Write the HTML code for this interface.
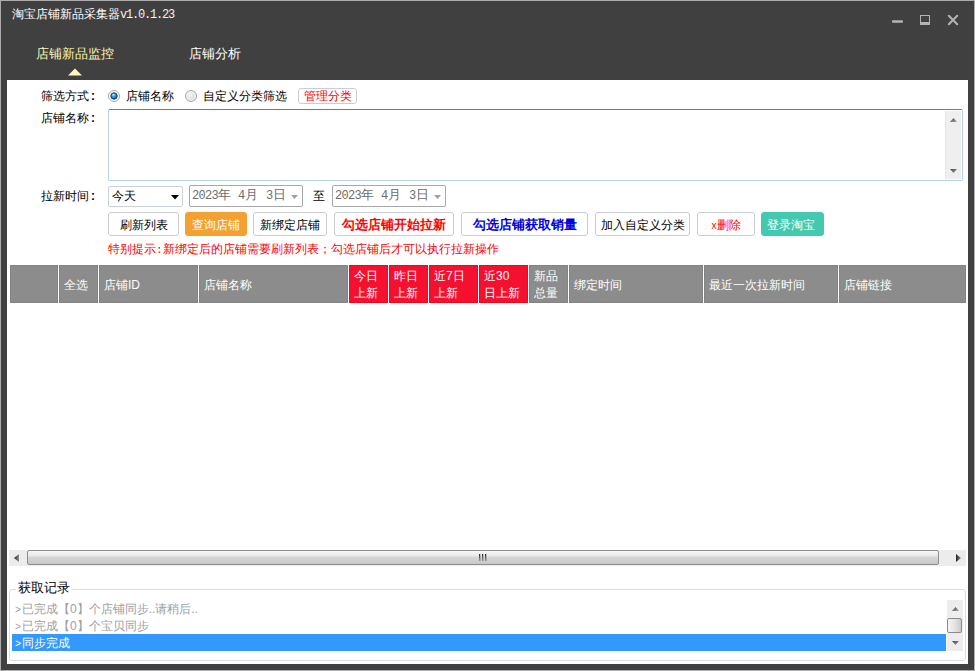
<!DOCTYPE html>
<html><head><meta charset="utf-8">
<style>
*{margin:0;padding:0;box-sizing:border-box}
html,body{width:975px;height:671px;overflow:hidden;background:#404040}
body{position:relative;font-family:"Liberation Sans",sans-serif;font-size:12px;line-height:12px;color:#000}
.a{position:absolute;white-space:nowrap}
#frame{position:absolute;left:0;top:0;width:975px;height:671px;border:1px solid #acacac}
#content{position:absolute;left:7px;top:80px;width:961px;height:584px;background:#fff}
.btn{position:absolute;height:24px;border:1px solid #c9cdd2;border-radius:3px;background:#fff;text-align:center;line-height:22px;font-size:12px;padding-top:1px}
.th{position:absolute;top:265px;height:38px;background:#8c8c8c;color:#fff;font-size:12px;box-shadow:inset 0 0 0 1px #838383}
.th span{position:absolute;left:5px;top:14px;white-space:nowrap}
.th.red{background:#f51030;box-shadow:inset 0 0 0 1px #ff0018}
.col{font-weight:bold;margin-left:2px}
.mono{font-family:"Liberation Mono",monospace;font-size:12px;letter-spacing:-0.7px}
.d13{font-size:13px}
.gt{font-family:"Liberation Mono",monospace;font-size:10px;margin-left:1px;margin-right:1px}
</style></head><body>
<div id="frame"></div>
<div class="a" style="left:12px;top:8px;color:#fff">淘宝店铺新品采集器<span style="font-family:'Liberation Mono',monospace;font-size:12px;letter-spacing:-1.2px;color:#f0f0f0">v1.0.1.23</span></div>
<!-- window controls -->
<div class="a" style="left:892px;top:20px;width:11px;height:3px;background:#b4b4b4;border-radius:1px;transform:scaleY(.8)"></div>
<div class="a" style="left:920px;top:15px;width:10px;height:10px;border:1px solid #b4b4b4;border-bottom:3px solid #b4b4b4"></div>
<svg class="a" style="left:947px;top:14px" width="12" height="12"><path d="M1.8 1.8L10.2 10.2M10.2 1.8L1.8 10.2" stroke="#b4b4b4" stroke-width="2" stroke-linecap="round"/></svg>
<!-- tabs -->
<div class="a" style="left:36px;top:47px;color:#fff5b0;font-size:13px;line-height:13px">店铺新品监控</div>
<div class="a" style="left:189px;top:47px;color:#fff;font-size:13px;line-height:13px">店铺分析</div>
<svg class="a" style="left:68px;top:68px" width="14" height="8"><path d="M0 7.5L7 0.5L14 7.5Z" fill="#fff9bd"/></svg>
<div id="content"></div>

<div class="a" style="left:41px;top:90px">筛选方式<span class="col">:</span></div>
<svg class="a" style="left:108px;top:90px" width="12" height="12"><defs><radialGradient id="rb" cx="0.4" cy="0.3" r="0.7"><stop offset="0" stop-color="#b8f0ff"/><stop offset="0.45" stop-color="#2aa0e8"/><stop offset="1" stop-color="#0a5a9a"/></radialGradient></defs><circle cx="6" cy="6" r="5.5" fill="#fff" stroke="#a4a4a4" stroke-width="1"/><circle cx="6" cy="6" r="3.2" fill="url(#rb)" stroke="#163c60" stroke-width="1"/></svg>
<div class="a" style="left:126px;top:90px">店铺名称</div>
<svg class="a" style="left:185px;top:90px" width="12" height="12"><defs><radialGradient id="rg" cx="0.4" cy="0.4" r="0.6"><stop offset="0" stop-color="#f4f4f4"/><stop offset="1" stop-color="#d4dae2"/></radialGradient></defs><circle cx="6" cy="6" r="5.5" fill="url(#rg)" stroke="#a4a4a4" stroke-width="1"/><circle cx="6" cy="6" r="4.3" fill="none" stroke="#fafafa" stroke-width="0.8"/></svg>
<div class="a" style="left:203px;top:90px">自定义分类筛选</div>
<div class="btn" style="left:298px;top:88px;width:59px;height:16px;line-height:14px;color:#ff0000;padding-top:0">管理分类</div>

<div class="a" style="left:41px;top:112px">店铺名称<span class="col">:</span></div>
<div class="a" style="left:108px;top:109px;width:855px;height:72px;border:1px solid #b6d0e8;border-top-color:#4a86c4;border-radius:2px"></div>
<div class="a" style="left:945px;top:111px;width:16px;height:68px;background:#efefef;border-left:1px solid #e6e6e6"></div>
<svg class="a" style="left:950px;top:118px" width="7" height="4"><defs><linearGradient id="ag" x1="0" y1="0" x2="1" y2="1"><stop offset="0" stop-color="#404040"/><stop offset="1" stop-color="#a8a8a8"/></linearGradient></defs><path d="M0 4L3.5 0L7 4Z" fill="url(#ag)"/></svg>
<svg class="a" style="left:950px;top:169px" width="7" height="4"><path d="M0 0L3.5 4L7 0Z" fill="url(#ag)"/></svg>

<div class="a" style="left:41px;top:190px">拉新时间<span class="col">:</span></div>
<div class="a" style="left:108px;top:186px;width:75px;height:21px;border:1px solid #ccd2da;border-radius:2px"></div>
<div class="a" style="left:112px;top:190px">今天</div>
<svg class="a" style="left:171px;top:195px" width="8" height="5"><path d="M0 0H8L4 4.5Z" fill="#000"/></svg>
<div class="a" style="left:189px;top:185px;width:114px;height:22px;border:1px solid #a8a8a8;border-radius:2px"></div>
<div class="a" style="left:192px;top:189px;color:#6d6d6d"><span class="mono">2023</span><span class="d13">年</span></div><div class="a" style="left:238px;top:189px;color:#6d6d6d"><span class="mono">4</span><span class="d13">月</span></div><div class="a" style="left:266px;top:189px;color:#6d6d6d"><span class="mono">3</span><span class="d13">日</span></div><svg class="a" style="left:291px;top:195px" width="8" height="4"><path d="M0 0H7L3.5 4Z" fill="#a0a0a0"/></svg>
<div class="a" style="left:313px;top:190px">至</div>
<div class="a" style="left:332px;top:185px;width:114px;height:22px;border:1px solid #a8a8a8;border-radius:2px"></div>
<div class="a" style="left:335px;top:189px;color:#6d6d6d"><span class="mono">2023</span><span class="d13">年</span></div><div class="a" style="left:381px;top:189px;color:#6d6d6d"><span class="mono">4</span><span class="d13">月</span></div><div class="a" style="left:409px;top:189px;color:#6d6d6d"><span class="mono">3</span><span class="d13">日</span></div><svg class="a" style="left:434px;top:195px" width="8" height="4"><path d="M0 0H7L3.5 4Z" fill="#a0a0a0"/></svg>

<div class="btn" style="left:108px;top:212px;width:71px">刷新列表</div>
<div class="btn" style="left:185px;top:212px;width:62px;background:#f4a132;border-color:#f4a132;color:#fff">查询店铺</div>
<div class="btn" style="left:253px;top:212px;width:74px">新绑定店铺</div>
<div class="btn" style="left:334px;top:212px;width:120px;color:#ff0000;font-weight:bold;font-size:13px">勾选店铺开始拉新</div>
<div class="btn" style="left:461px;top:212px;width:127px;color:#0000e0;font-weight:bold;font-size:13px">勾选店铺获取销量</div>
<div class="btn" style="left:595px;top:212px;width:95px">加入自定义分类</div>
<div class="btn" style="left:697px;top:212px;width:58px;color:#ff0000"><span style="font-family:'Liberation Sans',sans-serif;font-size:10px">x</span>删除</div>
<div class="btn" style="left:761px;top:212px;width:63px;background:#43c9b0;border-color:#43c9b0;color:#fff;padding-right:3px">登录淘宝</div>

<div class="a" style="left:108px;top:243px;color:#ff0000">特别提示<span style="font-family:'Liberation Mono',monospace;font-size:11px">:</span>新绑定后的店铺需要刷新列表；勾选店铺后才可以执行拉新操作</div>

<!-- table header -->
<div class="th" style="left:10px;width:48px"></div>
<div class="th" style="left:59px;width:39px"><span>全选</span></div>
<div class="th" style="left:99px;width:99px"><span>店铺ID</span></div>
<div class="th" style="left:199px;width:149px"><span>店铺名称</span></div>
<div class="th red" style="left:349px;width:39px"><span style="top:3px;line-height:16.5px">今日<br>上新</span></div>
<div class="th red" style="left:389px;width:39px"><span style="top:3px;line-height:16.5px">昨日<br>上新</span></div>
<div class="th red" style="left:429px;width:49px"><span style="top:3px;line-height:16.5px">近7日<br>上新</span></div>
<div class="th red" style="left:479px;width:49px"><span style="top:3px;line-height:16.5px">近30<br>日上新</span></div>
<div class="th" style="left:529px;width:39px"><span style="top:3px;line-height:16.5px">新品<br>总量</span></div>
<div class="th" style="left:569px;width:134px"><span>绑定时间</span></div>
<div class="th" style="left:704px;width:134px"><span>最近一次拉新时间</span></div>
<div class="th" style="left:839px;width:127px"><span>店铺链接</span></div>
<!-- h scrollbar -->
<div class="a" style="left:9px;top:550px;width:957px;height:16px;background:#ececec"></div>
<div class="a" style="left:27px;top:550px;width:912px;height:15px;border:1px solid #8e8e8e;border-radius:2px;background:linear-gradient(#f6f6f6 0%,#e8e8e8 40%,#d6d6d8 45%,#c8c8cc 100%)"></div>
<svg class="a" style="left:14px;top:554px" width="5" height="8"><defs><linearGradient id="hg" x1="0" y1="0" x2="1" y2="0"><stop offset="0" stop-color="#202020"/><stop offset="1" stop-color="#909090"/></linearGradient></defs><path d="M0 4L5 0V8Z" fill="url(#hg)"/></svg>
<svg class="a" style="left:956px;top:554px" width="5" height="8"><path d="M5 4L0 0V8Z" fill="url(#hg)"/></svg>
<div class="a" style="left:479px;top:554px;width:1px;height:7px;background:linear-gradient(#202020,#a0a0a0);box-shadow:0.5px 0 0 rgba(60,60,60,.5)"></div>
<div class="a" style="left:482px;top:554px;width:1px;height:7px;background:linear-gradient(#202020,#a0a0a0);box-shadow:0.5px 0 0 rgba(60,60,60,.5)"></div>
<div class="a" style="left:485px;top:554px;width:1px;height:7px;background:linear-gradient(#202020,#a0a0a0);box-shadow:0.5px 0 0 rgba(60,60,60,.5)"></div>

<!-- group box -->
<div class="a" style="left:9px;top:589px;width:957px;height:72px;border:1px solid #d5dfe5;border-radius:3px"></div>
<div class="a" style="left:16px;top:581px;background:#fff;padding:0 2px;font-size:13px;line-height:13px;width:56px">获取记录</div>
<div class="a" style="left:14px;top:603px;color:#a0a0a0"><span class="gt">&gt;</span>已完成【0】个店铺同步..请稍后..</div>
<div class="a" style="left:14px;top:620px;color:#a0a0a0"><span class="gt">&gt;</span>已完成【0】个宝贝同步</div>
<div class="a" style="left:12px;top:634px;width:934px;height:17px;background:#3399ff"></div>
<div class="a" style="left:14px;top:637px;color:#fff"><span class="gt">&gt;</span>同步完成</div>
<div class="a" style="left:947px;top:600px;width:16px;height:51px;background:#ededed"></div>
<svg class="a" style="left:952px;top:607px" width="7" height="4"><path d="M0 4L3.5 0L7 4Z" fill="url(#ag)"/></svg>
<svg class="a" style="left:952px;top:641px" width="7" height="4"><path d="M0 0L3.5 4L7 0Z" fill="url(#ag)"/></svg>
<div class="a" style="left:947px;top:618px;width:15px;height:15px;border:1px solid #8a8a8a;border-radius:2px;background:linear-gradient(90deg,#f4f4f4 0%,#e4e4e4 50%,#cacacc 100%)"></div>
</body></html>
